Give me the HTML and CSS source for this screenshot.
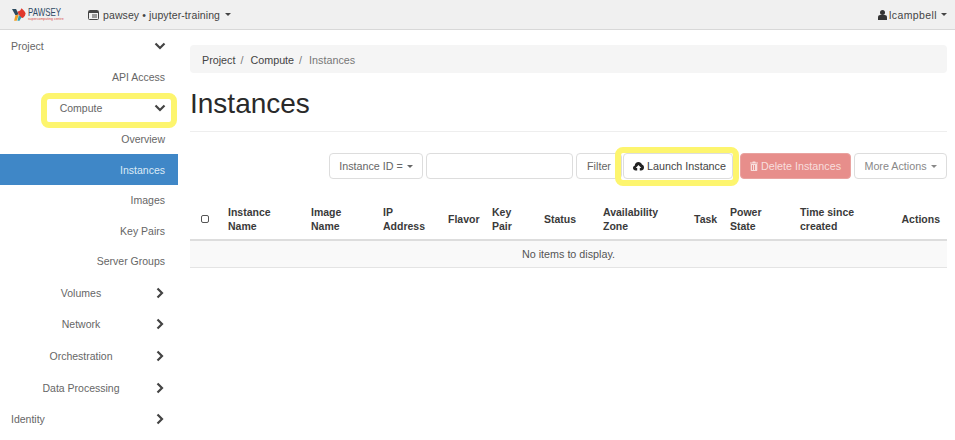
FILE: index.html
```html
<!DOCTYPE html>
<html lang="en">
<head>
<meta charset="utf-8">
<title>Instances</title>
<link rel="stylesheet" href="styles.css">
</head>
<body>
<header class="navbar">
  <a class="brand">
    <svg class="brand-mark" width="15" height="13" viewBox="0 0 22 18">
      <polygon points="0,1 6,1 10,9 5,10" fill="#2c4a5e"/>
      <polygon points="5,10 10,9 7,18 3,18" fill="#f0a028"/>
      <polygon points="8,5 12,3 14,0 18,4 20,7 19,11 16,14 12,13 10,9" fill="#e2382c"/>
      <polygon points="10,10 14,13 11,18 8,18" fill="#2f9fb0"/>
    </svg>
    <span class="brand-text"><span class="brand-name">PAWSEY</span><span class="brand-sub">supercomputing centre</span></span>
  </a>
  <div class="project-picker">
    <svg class="server-icon" width="11" height="10" viewBox="0 0 11 10"><rect x="0.5" y="0.5" width="10" height="9" rx="1" fill="none" stroke="#444"/><rect x="1" y="1" width="9" height="2" fill="#444"/><rect x="4" y="4.5" width="5" height="1" fill="#444"/><rect x="4" y="6.5" width="5" height="1" fill="#444"/></svg>
    <span>pawsey • jupyter-training</span><i class="caret"></i>
  </div>
  <div class="user-menu">
    <svg width="9" height="10" viewBox="0 0 9 10"><circle cx="4.5" cy="2.6" r="2.5" fill="#333"/><path d="M0 10V7.2C0 5.8 1 5 2.2 5h4.6C8 5 9 5.8 9 7.2V10z" fill="#333"/></svg>
    <span>lcampbell</span><i class="caret"></i>
  </div>
</header>

<div class="layout">
  <nav class="sidebar">
    <div class="row section first"><span class="label-left">Project</span><svg class="chev" viewBox="0 0 12 8"><path d="M1.500 1.500 6 6l4.500-4.500" /></svg></div>
    <div class="row leaf">API Access</div>
    <div class="row group"><span class="label-mid">Compute</span><svg class="chev" viewBox="0 0 12 8"><path d="M1.500 1.500 6 6l4.500-4.500" /></svg></div>
    <div class="row leaf">Overview</div>
    <div class="row leaf active">Instances</div>
    <div class="row leaf">Images</div>
    <div class="row leaf">Key Pairs</div>
    <div class="row leaf">Server Groups</div>
    <div class="row group"><span class="label-mid">Volumes</span><svg class="chev right" viewBox="0 0 8 12"><path d="M1.500 1.500 6 6l-4.500 4.500" /></svg></div>
    <div class="row group"><span class="label-mid">Network</span><svg class="chev right" viewBox="0 0 8 12"><path d="M1.500 1.500 6 6l-4.500 4.500" /></svg></div>
    <div class="row group"><span class="label-mid">Orchestration</span><svg class="chev right" viewBox="0 0 8 12"><path d="M1.500 1.500 6 6l-4.500 4.500" /></svg></div>
    <div class="row group"><span class="label-mid">Data Processing</span><svg class="chev right" viewBox="0 0 8 12"><path d="M1.500 1.500 6 6l-4.500 4.500" /></svg></div>
    <div class="row section"><span class="label-left">Identity</span><svg class="chev right" viewBox="0 0 8 12"><path d="M1.500 1.500 6 6l-4.500 4.500" /></svg></div>
  </nav>

  <main class="content">
    <ol class="breadcrumb">
      <li>Project</li><li class="sep">/</li><li>Compute</li><li class="sep">/</li><li class="current">Instances</li>
    </ol>
    <h1 class="title">Instances</h1>
    <div class="toolbar">
      <button class="btn field-btn">Instance ID = <i class="caret"></i></button>
      <input class="filter-input" type="text">
      <button class="btn filter-btn">Filter</button>
      <button class="btn launch-btn">
        <svg width="11" height="9" viewBox="0 0 11 9"><path d="M2.600 8.500C1.200 8.500 0 7.500 0 6.100c0-1.100.7-2 1.700-2.300C1.800 1.700 3.400 0 5.500 0c1.600 0 3 1 3.500 2.400C10.200 2.700 11 3.900 11 5.400c0 1.700-1.300 3.100-3 3.100H6.800V6h1.500L5.500 3 2.700 6h1.500v2.500z" fill="#222"/></svg>
        Launch Instance
      </button>
      <button class="btn delete-btn">
        <svg width="8" height="10" viewBox="0 0 8 10"><path d="M0 1.500h2.300L2.800.5h2.400l.5 1H8v1H0zM.7 3h6.600v6c0 .6-.4 1-1 1H1.700c-.6 0-1-.4-1-1zm1.300 1v5h1V4zm2 0v5h1V4z" fill="#f8dedd"/></svg>
        Delete Instances
      </button>
      <button class="btn more-btn">More Actions <i class="caret"></i></button>
    </div>
    <table class="instances">
      <colgroup>
        <col class="c-check"><col class="c-name"><col class="c-image"><col class="c-ip"><col class="c-flavor"><col class="c-key"><col class="c-status"><col class="c-zone"><col class="c-task"><col class="c-power"><col class="c-time"><col class="c-actions">
      </colgroup>
      <thead>
        <tr>
          <th class="check-cell"><span class="checkbox"></span></th>
          <th>Instance Name</th><th>Image Name</th><th>IP Address</th><th>Flavor</th><th>Key Pair</th><th>Status</th><th>Availability Zone</th><th>Task</th><th>Power State</th><th>Time since created</th><th class="actions">Actions</th>
        </tr>
      </thead>
      <tbody>
        <tr><td colspan="12">No items to display.</td></tr>
      </tbody>
    </table>
  </main>
</div>

<div class="highlight hl-compute"></div>
<div class="highlight hl-launch"></div>
</body>
</html>
```
FILE: styles.css
```css
* { box-sizing: border-box; }
html, body { margin: 0; height: 440px; overflow: hidden; background: #fff; }
body { font-family: "Liberation Sans", Arial, sans-serif; font-size: 10.750px; color: #555; position: relative; }

.navbar { height: 30px; background: #f0f0f0; border-bottom: 1px solid #d8d8d8; display: flex; align-items: center; padding: 0 8px 0 12px; color: #444; }
.brand { display: flex; align-items: center; gap: 1px; width: 76px; }
.brand-mark { flex: none; }
.brand-text { display: flex; flex-direction: column; line-height: 1; }
.brand-name { font-size: 11px; color: #2f4a66; transform: scaleX(.72); transform-origin: left; line-height: 9px; }
.brand-sub { font-size: 3.500px; color: #d9483f; line-height: 5px; white-space: nowrap; }
.project-picker { display: flex; align-items: center; gap: 4px; font-size: 10.500px; letter-spacing: .1px; }
.user-menu { margin-left: auto; display: flex; align-items: center; gap: 3px; font-size: 10.500px; letter-spacing: .4px; }
.user-menu svg { margin-right: -1px; }
.caret { display: inline-block; width: 0; height: 0; border-left: 3.500px solid transparent; border-right: 3.500px solid transparent; border-top: 3.500px solid currentColor; vertical-align: middle; margin-left: 1px; }

.layout { display: flex; align-items: flex-start; }
.sidebar { width: 178px; flex: none; color: #666; font-size: 10.500px; }
.row { display: flex; align-items: center; height: 30.500px; padding-right: 12px; }
.row.group, .row.section { height: 31.700px; }
.row.first { height: 31.500px; }
.leaf { justify-content: flex-end; padding-right: 13px; }
.leaf.active { background: #3f87c7; color: #dceaf6; height: 31px; }
.label-left { flex: 1; padding-left: 11px; }
.label-mid { flex: 1; padding-left: 8px; text-align: center; }
.chev { width: 12px; height: 8px; flex: none; fill: none; stroke: #444; stroke-width: 2.200px; }
.chev.right { height: 12px; }

.content { flex: 1; padding: 15px 8px 0 12px; min-width: 0; }
.breadcrumb { list-style: none; margin: 0; padding: 2px 12px 0; height: 28px; background: #f5f5f5; border-radius: 4px; display: flex; align-items: center; color: #444; }
.breadcrumb .sep { padding: 0 7px 0 5px; color: #777; }
.breadcrumb .current { color: #777; }
.title { margin: 0; height: 59px; padding-top: 15px; font-size: 28px; line-height: 32px; font-weight: 400; color: #2a2a2a; border-bottom: 1px solid #eee; }
.toolbar { display: flex; margin-top: 21px; margin-left: 139px; height: 26px; gap: 3px; }
.btn { font: inherit; height: 26px; padding: 0; background: #fff; border: 1px solid #ddd; border-radius: 4px; color: #666; display: flex; align-items: center; justify-content: center; gap: 3px; white-space: nowrap; flex: none; }
.field-btn { width: 94px; }
.filter-input { width: 147px; height: 26px; border: 1px solid #ddd; border-radius: 4px; padding: 0; background: #fff; flex: none; }
.filter-btn { width: 46px; }
.launch-btn { width: 110px; margin-left: -2px; padding-left: 3px; color: #444; }
.delete-btn { width: 111px; margin-left: 4px; background: #e78e8b; border-color: #e9a3a0; color: #f8dedd; }
.more-btn { width: 93px; color: #888; }
.instances { margin-top: 20px; width: 757px; table-layout: fixed; border-collapse: collapse; color: #3a3a3a; font-size: 10.500px; }
.c-check { width: 30px; } .c-name { width: 83px; } .c-image { width: 72px; } .c-ip { width: 65px; }
.c-flavor { width: 44px; } .c-key { width: 52px; } .c-status { width: 59px; } .c-zone { width: 91px; }
.c-task { width: 36px; } .c-power { width: 70px; } .c-time { width: 93px; } .c-actions { width: 62px; }
.instances th { font-weight: 700; text-align: left; line-height: 14px; padding: 6px 8px; height: 38px; border-bottom: 2px solid #ddd; }
.instances th.actions { text-align: right; padding-right: 7px; padding-left: 0; }
.instances th.check-cell { padding-left: 11px; padding-right: 0; }
.checkbox { display: block; width: 8px; height: 8px; border: 1px solid #555; border-radius: 2px; }
.instances td { height: 27px; padding: 0; text-align: center; background: #f9f9f9; border-bottom: 1px solid #e4e4e4; color: #555; font-size: 10.750px; }

.highlight { position: absolute; border: 6px solid #fdf56e; border-radius: 8px; pointer-events: none; }
.hl-compute { left: 41px; top: 93px; width: 136px; height: 35px; }
.hl-launch { left: 615px; top: 147px; width: 124px; height: 39px; }
```
